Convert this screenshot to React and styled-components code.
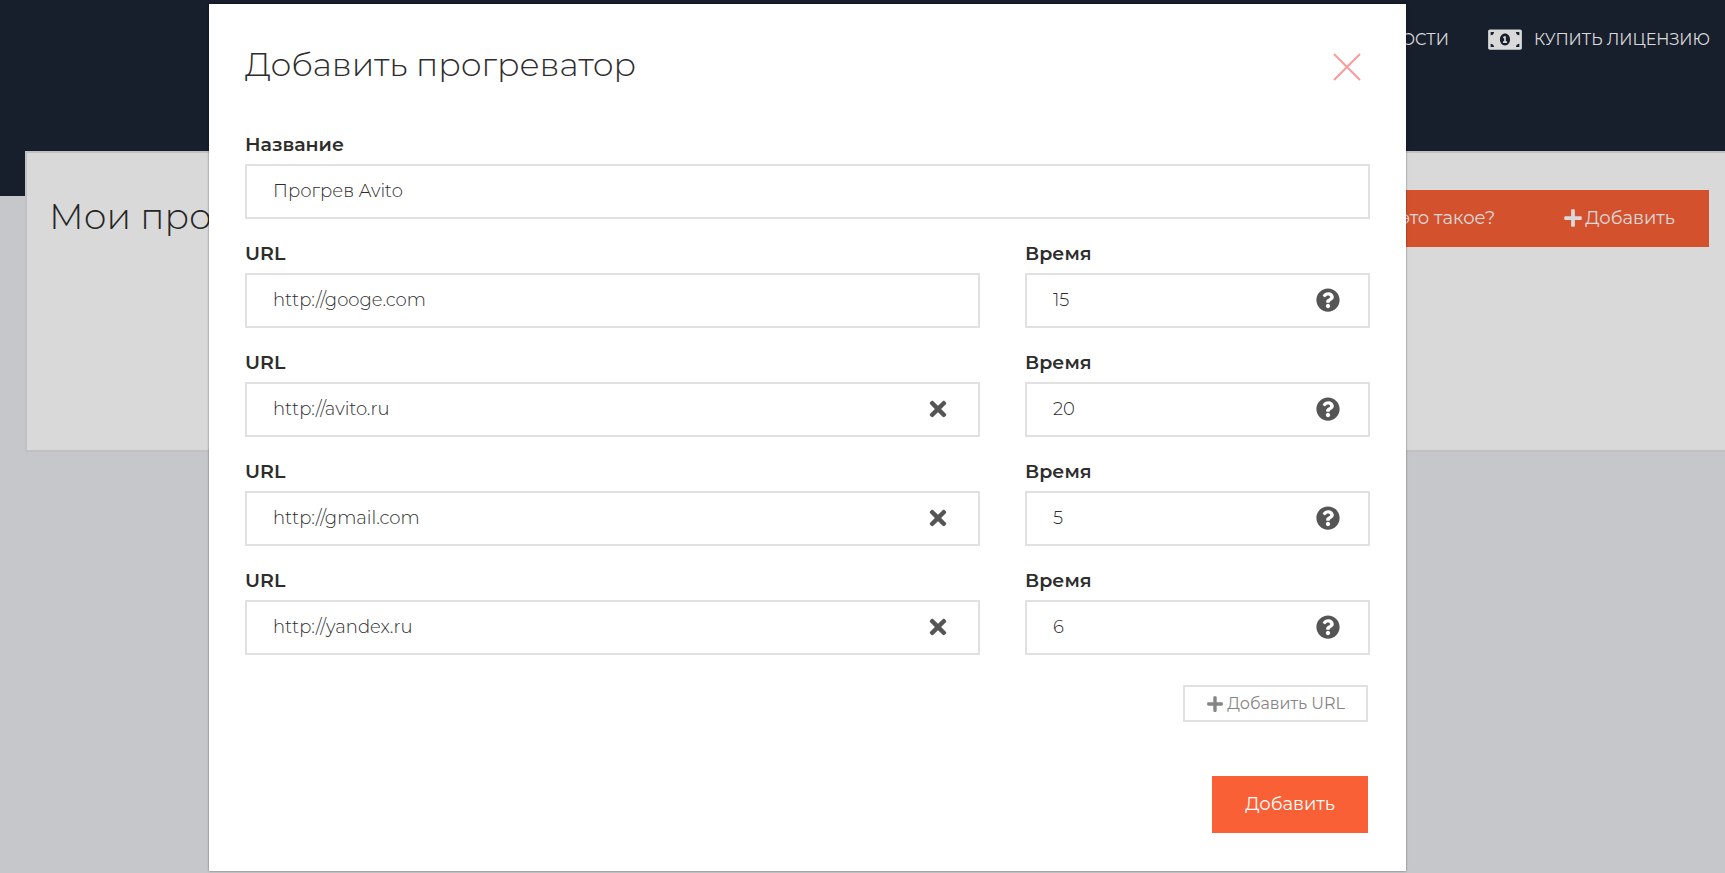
import React from "react";
import styled, { createGlobalStyle } from "styled-components";
import { FaMoneyBillAlt, FaPlus, FaQuestionCircle, FaTimes } from "react-icons/fa";

const GlobalStyle = createGlobalStyle`
  * { box-sizing: border-box; }
  body {
    margin: 0;
    background: #e9eaef;
    color: #2d2d2d;
    font-family: Montserrat, Inter, "Noto Sans", sans-serif;
    font-size: 18px;
    line-height: 24px;
  }
  button, input { font: inherit; }
`;

const Page = styled.div`
  position: relative;
  min-height: 100vh;
  overflow: hidden;
`;

const Header = styled.header`
  height: 196px;
  padding: 26px 15px 0;
  background: #1c2434;
`;

const Nav = styled.nav`
  display: flex;
  justify-content: flex-end;
  gap: 39px;
`;

const NavLink = styled.a`
  display: flex;
  align-items: center;
  gap: 12px;
  color: #fff;
  font-size: 16px;
  text-decoration: none;
  text-transform: uppercase;
  svg { width: 34px; height: 27px; }
`;

const Panel = styled.main`
  display: flex;
  justify-content: space-between;
  align-items: flex-start;
  min-height: 301px;
  margin: -45px 0 0 25px;
  padding: 37px 16px 24px 22px;
  border: 2px solid #e3e3e6;
  border-right: 0;
  background: #fff;
`;

const Title = styled.h1`
  margin: 0;
  font-size: ${(p) => (p.$large ? 36 : 33)}px;
  font-weight: 300;
  line-height: 42px;
`;

const PanelTitle = styled(Title)`
  padding-top: 5px;
`;

const Actions = styled.div`
  display: flex;
`;

const PrimaryButton = styled.button`
  display: flex;
  align-items: center;
  gap: 2px;
  height: 57px;
  padding: 0 ${(p) => (p.$wide ? 34 : 33)}px 2px;
  border: 0;
  background: #f96036;
  color: #fff;
  svg { width: 20px; height: 20px; }
`;

const Overlay = styled.div`
  position: absolute;
  inset: 0;
  padding: 4px 319px 2px 209px;
  background: rgba(0, 0, 0, 0.15);
`;

const Dialog = styled.section`
  padding: 39px 36px 38px;
  background: #fff;
  box-shadow: 0 0 2px rgba(0, 0, 0, 0.5);
`;

const DialogHead = styled.div`
  display: flex;
  justify-content: space-between;
  align-items: flex-end;
  padding-right: 8px;
  margin-bottom: 48px;
`;

const CloseButton = styled.button`
  display: flex;
  padding: 0 0 3px;
  border: 0;
  background: none;
  color: #fb9a9a;
  svg { width: 30px; height: 30px; }
`;

const Form = styled.form`
  display: flex;
  flex-direction: column;
  gap: 23px;
`;

const Row = styled.div`
  display: grid;
  grid-template-columns: 49fr 23fr;
  gap: 45px;
`;

const Field = styled.div`
  display: flex;
  flex-direction: column;
  gap: 7px;
`;

const Label = styled.label`
  font-size: 19px;
  font-weight: 600;
`;

const Control = styled.div`
  display: flex;
  align-items: center;
  height: 55px;
  padding-right: 28px;
  border: 2px solid #e1e1e1;
  background: #fff;
`;

const Input = styled.input`
  flex: 1;
  min-width: 0;
  height: 100%;
  padding: 0 0 2px 26px;
  border: 0;
  outline: 0;
  background: none;
  color: #2d2d2d;
  font-weight: 300;
`;

const IconButton = styled.button`
  display: flex;
  padding: 0 0 1px;
  border: 0;
  background: none;
  color: #555;
  font-size: 24px;
`;

const Footer = styled.div`
  display: flex;
  flex-direction: column;
  align-items: flex-end;
  gap: 54px;
  padding: 7px 2px 0 0;
`;

const OutlineButton = styled.button`
  display: flex;
  align-items: center;
  gap: 3px;
  height: 37px;
  padding: 0 21px;
  border: 2px solid #e1e1e1;
  background: #fff;
  color: #858585;
  font-size: 16px;
  svg { width: 18px; height: 18px; }
`;

const entries = [
  { url: "http://googe.com", time: "15" },
  { url: "http://avito.ru", time: "20" },
  { url: "http://gmail.com", time: "5" },
  { url: "http://yandex.ru", time: "6" },
];

export default function App() {
  return (
    <>
      <GlobalStyle />
      <Page>
        <Header>
          <Nav>
            <NavLink href="#news">Новости</NavLink>
            <NavLink href="#license"><FaMoneyBillAlt />Купить лицензию</NavLink>
          </Nav>
        </Header>
        <Panel>
          <PanelTitle $large>Мои прогреваторы</PanelTitle>
          <Actions>
            <PrimaryButton type="button" $wide>Что это такое?</PrimaryButton>
            <PrimaryButton type="button" $wide><FaPlus />Добавить</PrimaryButton>
          </Actions>
        </Panel>
        <Overlay>
          <Dialog role="dialog" aria-labelledby="dialog-title">
            <DialogHead>
              <Title as="h2" id="dialog-title">Добавить прогреватор</Title>
              <CloseButton type="button" aria-label="Закрыть">
                <svg viewBox="0 0 30 30" fill="none" stroke="currentColor" strokeWidth="2">
                  <path d="M2 2l26 26M28 2L2 28" />
                </svg>
              </CloseButton>
            </DialogHead>
            <Form onSubmit={(e) => e.preventDefault()}>
              <Field>
                <Label htmlFor="name">Название</Label>
                <Control><Input id="name" defaultValue="Прогрев Avito" /></Control>
              </Field>
              {entries.map((entry, i) => (
                <Row key={entry.url}>
                  <Field>
                    <Label htmlFor={`url-${i}`}>URL</Label>
                    <Control>
                      <Input id={`url-${i}`} defaultValue={entry.url} />
                      {i > 0 && (
                        <IconButton type="button" aria-label="Удалить"><FaTimes /></IconButton>
                      )}
                    </Control>
                  </Field>
                  <Field>
                    <Label htmlFor={`time-${i}`}>Время</Label>
                    <Control>
                      <Input id={`time-${i}`} defaultValue={entry.time} />
                      <IconButton type="button" aria-label="Подсказка"><FaQuestionCircle /></IconButton>
                    </Control>
                  </Field>
                </Row>
              ))}
              <Footer>
                <OutlineButton type="button"><FaPlus />Добавить URL</OutlineButton>
                <PrimaryButton type="submit">Добавить</PrimaryButton>
              </Footer>
            </Form>
          </Dialog>
        </Overlay>
      </Page>
    </>
  );
}
